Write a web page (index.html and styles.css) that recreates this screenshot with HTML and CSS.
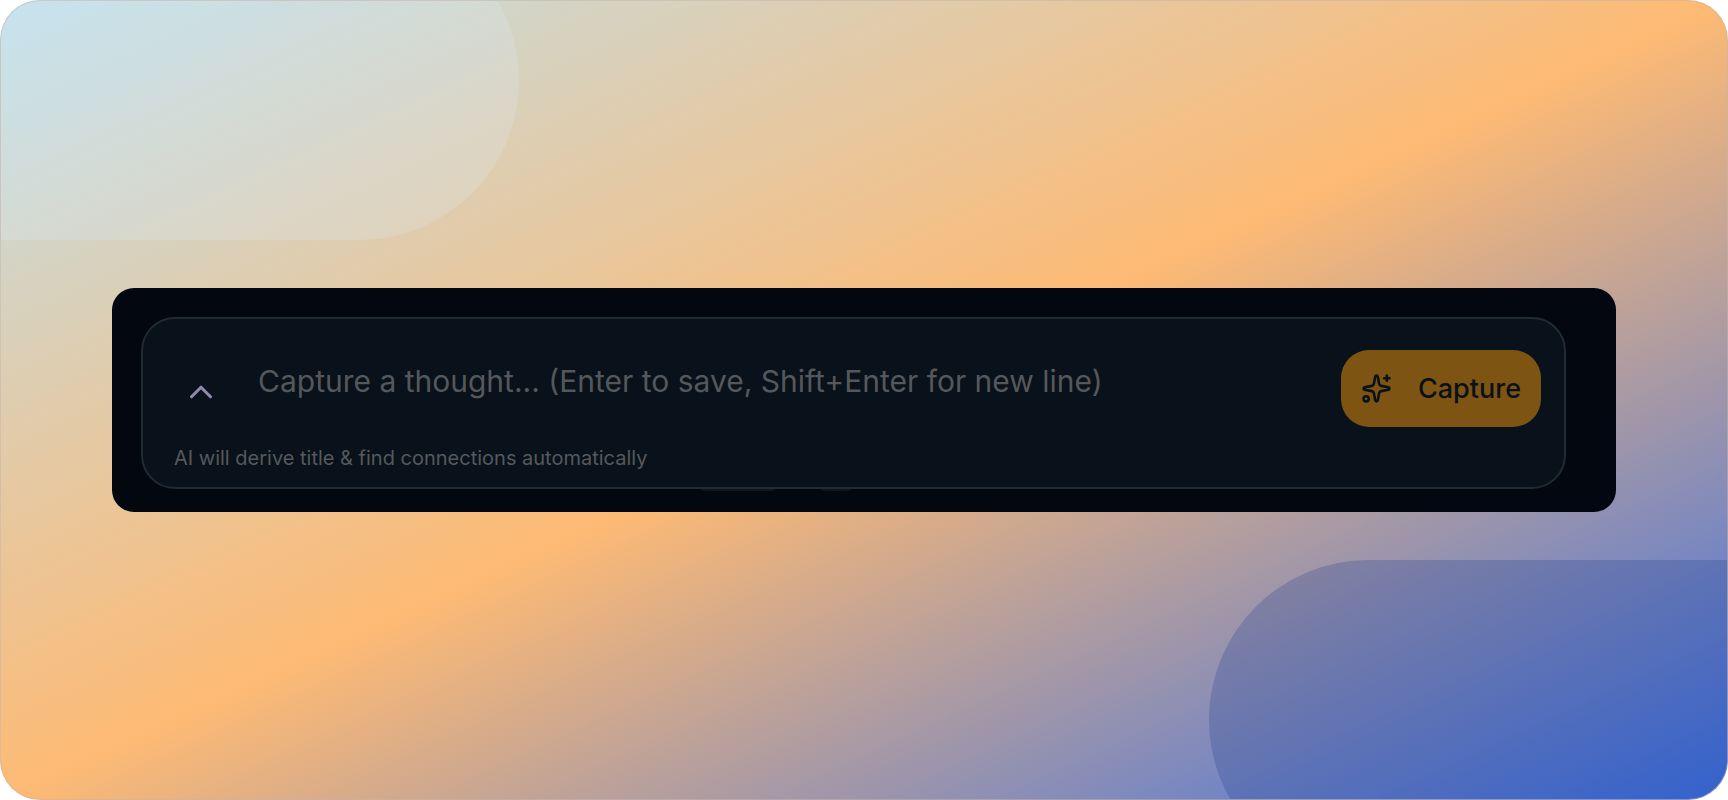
FILE: index.html
```html
<!DOCTYPE html>
<html lang="en">
<head>
  <meta charset="utf-8">
  <meta name="viewport" content="width=device-width, initial-scale=1">
  <title>Capture a thought</title>
  <link rel="stylesheet" href="styles.css">
</head>
<body>
  <main class="stage">
    <div class="blob blob-top"></div>
    <div class="blob blob-bottom"></div>

    <div class="panel">
      <!-- tops of the chips that sit behind the card -->
      <div class="peek peek-wide"></div>
      <div class="peek peek-small"></div>

      <form class="card">
        <div class="row">
          <button class="toggle" type="button" aria-label="Expand">
            <svg class="toggle-icon" viewBox="0 0 24 24" aria-hidden="true">
              <path d="m18 15-6-6-6 6"/>
            </svg>
          </button>
          <textarea class="thought" aria-label="Thought" rows="1" placeholder="Capture a thought... (Enter to save, Shift+Enter for new line)"></textarea>
          <button class="capture" type="submit">
            <svg class="capture-icon" viewBox="0 0 24 24" aria-hidden="true">
              <path d="M11.017 2.814a1 1 0 0 1 1.966 0l1.051 5.558a2 2 0 0 0 1.594 1.594l5.558 1.051a1 1 0 0 1 0 1.966l-5.558 1.051a2 2 0 0 0-1.594 1.594l-1.051 5.558a1 1 0 0 1-1.966 0l-1.051-5.558a2 2 0 0 0-1.594-1.594l-5.558-1.051a1 1 0 0 1 0-1.966l5.558-1.051a2 2 0 0 0 1.594-1.594z"/>
              <path d="M20 2v4"/>
              <path d="M22 4h-4"/>
              <circle cx="4" cy="20" r="2"/>
            </svg>
            Capture
          </button>
        </div>
        <p class="hint">AI will derive title &amp; find connections automatically</p>
      </form>
    </div>
  </main>
</body>
</html>
```
FILE: styles.css
```css
* {
  box-sizing: border-box;
}
body {
  margin: 0;
  background-color: #ffffff;
  font-family: Inter, "Liberation Sans", sans-serif;
}
.stage {
  position: relative;
  display: flex;
  align-items: center;
  min-height: 100vh;
  padding: 0 111px;
  overflow: hidden;
  border: 1px solid rgba(200, 180, 170, 0.5);
  border-radius: 40px;
  background-image: linear-gradient(to bottom right, #bfe0ec, #fdba74, #3a6fe4);
  background-origin: border-box;
}
.blob {
  position: absolute;
  width: 40%;
  height: 40%;
  border-radius: 999px;
}
.blob-top {
  top: -10%;
  left: -10%;
  background-color: rgba(224, 242, 254, 0.2);
}
.blob-bottom {
  right: -10%;
  bottom: -10%;
  background-color: rgba(30, 58, 138, 0.25);
}
.panel {
  position: relative;
  flex: 1;
  padding: 29px 50px 23px 29px;
  border-radius: 22px;
  background-color: #03070f;
}
.peek {
  position: absolute;
  bottom: 21px;
  height: 12px;
  border-radius: 6px;
  background-color: #10161e;
}
.peek-wide {
  left: 39%;
  width: 78px;
}
.peek-small {
  left: 47%;
  width: 34px;
}
.card {
  position: relative;
  padding: 31px 23px 17px 31px;
  border: 2px solid #222a33;
  border-radius: 34px;
  background-color: #09111a;
}
.row {
  display: flex;
  align-items: flex-start;
}
.toggle {
  display: flex;
  align-items: center;
  justify-content: center;
  width: 54px;
  height: 84px;
  padding: 0;
  border: none;
  background: none;
  color: #9088ae;
  cursor: pointer;
}
.toggle-icon,
.capture-icon {
  fill: none;
  stroke: currentColor;
  stroke-width: 2;
  stroke-linecap: round;
  stroke-linejoin: round;
}
.toggle-icon {
  width: 38px;
  height: 38px;
}
.thought {
  flex: 1;
  height: 84px;
  padding: 10px 30px;
  border: none;
  outline: none;
  resize: none;
  background: none;
  color: #e5e7eb;
  font-family: inherit;
  font-size: 30px;
  line-height: 42px;
}
.thought::placeholder {
  color: #55585b;
}
.capture {
  display: flex;
  align-items: center;
  gap: 26px;
  height: 77px;
  padding: 0 20px;
  border: none;
  border-radius: 28px;
  background-color: #7e5412;
  color: #09111a;
  font-family: inherit;
  font-size: 27px;
  font-weight: 500;
  cursor: pointer;
}
.capture-icon {
  width: 31px;
  height: 31px;
}
.hint {
  margin: 12px 0 0;
  color: #55595d;
  font-size: 20px;
  line-height: 24px;
}
```
